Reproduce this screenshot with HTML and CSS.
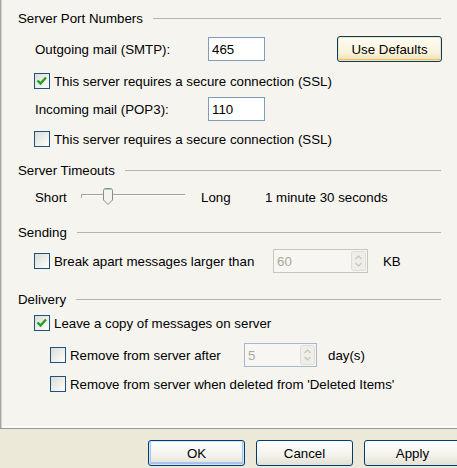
FILE: index.html
```html
<!DOCTYPE html>
<html lang="en">
  <head>
    <meta charset="utf-8" />
    <title>Account properties - Advanced</title>
    <link rel="stylesheet" href="styles.css">
  </head>
  <body>
    <main class="page">
      <section class="group">
        <h2 class="group-title">Server Port Numbers</h2>
        <div class="row port-row first-port">
          <span class="port-label">Outgoing mail (SMTP):</span>
          <span class="text-input">465</span>
          <button class="xp-btn defaults-btn">Use Defaults</button>
        </div>
        <label class="row check-row ssl-smtp">
          <span class="box checked"><svg width="14" height="14" viewBox="0 0 14 14"><path d="M2.5 6.5 L5.5 9.5 L11 3.5" fill="none" stroke="#21a121" stroke-width="2.4"/></svg></span>
          This server requires a secure connection (SSL)
        </label>
        <div class="row port-row second-port">
          <span class="port-label">Incoming mail (POP3):</span>
          <span class="text-input">110</span>
        </div>
        <label class="row check-row ssl-pop">
          <span class="box"></span>
          This server requires a secure connection (SSL)
        </label>
      </section>

      <section class="group timeouts">
        <h2 class="group-title">Server Timeouts</h2>
        <div class="row slider-row">
          <span class="slider-short">Short</span>
          <svg class="slider" width="104" height="20" viewBox="0 0 104 20">
            <path d="M0.5 11 V7.5 H104" fill="none" stroke="#a3a29c"/>
            <path d="M1 8.5 H104" fill="none" stroke="#ffffff"/>
            <path d="M22.5 3.5 Q22.5 1.5 24.5 1.5 H29.5 Q31.5 1.5 31.5 3.5 V13 L27 17.5 L22.5 13 Z" fill="#f4f3ee" stroke="#8d8c86"/>
            <path d="M24 2.5 H30" stroke="#9ad79a"/>
          </svg>
          <span class="slider-long">Long</span>
          <span>1 minute 30 seconds</span>
        </div>
      </section>

      <section class="group sending">
        <h2 class="group-title">Sending</h2>
        <div class="row spin-row">
          <span class="box"></span>
          <span class="check-text break-text">Break apart messages larger than</span>
          <span class="spin spin-kb">
            <span class="spin-value">60</span>
            <svg class="spin-arrows" width="15" height="20" viewBox="0 0 15 20">
              <rect x="0.5" y="0.5" width="14" height="19" rx="2" fill="#efeee8" stroke="#e0ded4"/>
              <path d="M4.5 8 L7.5 5 L10.5 8" fill="none" stroke="#c6c4b9" stroke-width="1.2"/>
              <path d="M4.5 12 L7.5 15 L10.5 12" fill="none" stroke="#c6c4b9" stroke-width="1.2"/>
            </svg>
          </span>
          <span class="unit-kb">KB</span>
        </div>
      </section>

      <section class="group delivery">
        <h2 class="group-title">Delivery</h2>
        <label class="row check-row leave-copy">
          <span class="box checked"><svg width="14" height="14" viewBox="0 0 14 14"><path d="M2.5 6.5 L5.5 9.5 L11 3.5" fill="none" stroke="#21a121" stroke-width="2.4"/></svg></span>
          Leave a copy of messages on server
        </label>
        <div class="row spin-row sub remove-after">
          <span class="box"></span>
          <span class="check-text after-text">Remove from server after</span>
          <span class="spin spin-days">
            <span class="spin-value">5</span>
            <svg class="spin-arrows" width="15" height="20" viewBox="0 0 15 20">
              <rect x="0.5" y="0.5" width="14" height="19" rx="2" fill="#efeee8" stroke="#e0ded4"/>
              <path d="M4.5 8 L7.5 5 L10.5 8" fill="none" stroke="#c6c4b9" stroke-width="1.2"/>
              <path d="M4.5 12 L7.5 15 L10.5 12" fill="none" stroke="#c6c4b9" stroke-width="1.2"/>
            </svg>
          </span>
          <span class="unit-days">day(s)</span>
        </div>
        <label class="row check-row sub remove-deleted">
          <span class="box"></span>
          Remove from server when deleted from 'Deleted Items'
        </label>
      </section>
    </main>

    <footer class="actions">
      <button class="xp-btn action-btn default">OK</button>
      <button class="xp-btn action-btn">Cancel</button>
      <button class="xp-btn action-btn">Apply</button>
    </footer>
  </body>
</html>
```

FILE: styles.css
```css
* {
  box-sizing: border-box;
}

body {
  margin: 0;
  width: 457px;
  height: 468px;
  overflow: hidden;
  background-color: #ece9d8;
  color: #000;
  font-family: "Liberation Sans", Arial, sans-serif;
  font-size: 13.3px;
}

.page {
  height: 429px;
  padding: 8px 16px 0 17px;
  background-color: #f5f4ef;
  border-left: 1px solid #a5a5a1;
  border-bottom: 1px solid #919b9c;
  box-shadow: inset 1px 0 #d6d5cd, inset 0 -2px #fbfbf8;
}

.group-title {
  display: flex;
  align-items: center;
  height: 20px;
  margin: 0;
  font-size: 13.3px;
  font-weight: normal;
}

.group-title::after {
  content: "";
  flex: 1;
  margin-left: 10px;
  border-top: 1px solid #b4b3ad;
}

.timeouts {
  margin-top: 11px;
}

.sending {
  margin-top: 15px;
}

.delivery {
  margin-top: 16px;
}

.row {
  display: flex;
  align-items: center;
  padding-left: 16px;
}

.row.sub {
  padding-left: 32px;
}

.check-row {
  height: 20px;
}

.port-row {
  height: 26px;
}

.first-port {
  margin-top: 8px;
}

.ssl-smtp {
  margin-top: 9px;
}

.second-port {
  margin-top: 5px;
}

.ssl-pop {
  margin-top: 7px;
}

.port-label {
  width: 174px;
  padding-left: 1px;
}

.text-input {
  display: flex;
  align-items: center;
  width: 57px;
  height: 24px;
  padding: 0 3px;
  background-color: #fff;
  border: 1px solid #7f9db9;
}

.box {
  flex: none;
  display: flex;
  align-items: center;
  justify-content: center;
  width: 16px;
  height: 16px;
  margin-right: 4px;
  border: 1px solid #1c5180;
  background: linear-gradient(135deg, #dcdcd5, #f4f4f0 70%, #fff);
}

.check-text {
  white-space: nowrap;
}

.break-text {
  width: 219px;
}

.after-text {
  width: 174px;
}

.xp-btn {
  height: 26px;
  padding: 0;
  font-family: inherit;
  font-size: 13.3px;
  color: #000;
  border: 1px solid #003c74;
  border-radius: 3px;
  background: linear-gradient(#ffffff, #f3f2ec 60%, #e3e0d3);
}

.defaults-btn {
  width: 105px;
  margin-left: auto;
  margin-right: -1px;
  background: linear-gradient(#fffdf3, #f8f1da 70%, #ecdcb0);
  box-shadow: inset 0 0 0 1px #fbe3a6, inset 0 -1px 0 1px #f0c25c;
}

.slider-row {
  height: 20px;
  margin-top: 7px;
}

.slider-short {
  width: 47px;
  padding-left: 1px;
}

.slider {
  flex: none;
  margin-right: 16px;
}

.slider-long {
  width: 64px;
}

.spin-row {
  height: 24px;
  margin-top: 7px;
}

.spin {
  display: flex;
  align-items: center;
  justify-content: space-between;
  height: 24px;
  padding: 0 1px 0 3px;
  color: #aca899;
  background-color: #f7f6f2;
  border: 1px solid #c9c7ba;
}

.spin-kb {
  width: 95px;
}

.unit-kb {
  margin-left: 15px;
}

.leave-copy {
  margin-top: 4px;
}

.remove-after {
  margin-top: 10px;
}

.spin-days {
  width: 73px;
  border-color: #a9b8c9;
}

.unit-days {
  margin-left: 11px;
}

.remove-deleted {
  margin-top: 7px;
}

.actions {
  display: flex;
  gap: 11px;
  padding: 11px 0 0 148px;
}

.action-btn {
  flex: none;
  width: 97px;
}

.action-btn.default {
  box-shadow: inset 0 0 0 1px #cee7ff, inset 0 -1px 0 2px #a9c3ee;
}
```
